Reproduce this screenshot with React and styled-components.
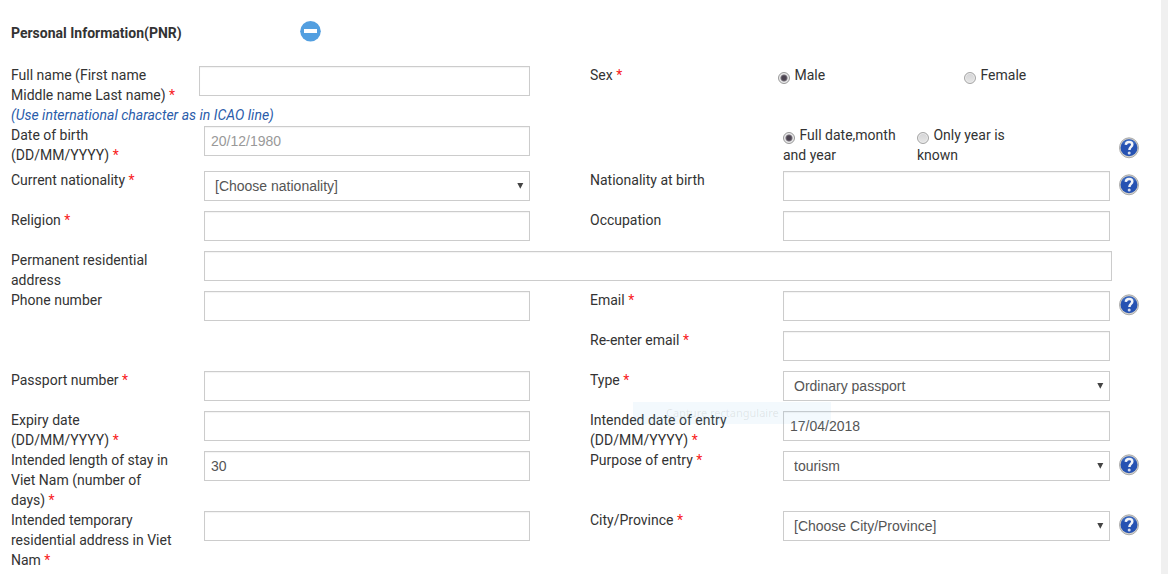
import React from "react";
import styled, { createGlobalStyle, css } from "styled-components";

const GlobalStyle = createGlobalStyle`
  *, *::before, *::after { box-sizing: border-box; }
  body {
    margin: 0;
    background: #f0f0f0;
    color: #333;
    font: 14px/20px Roboto, "Liberation Sans", sans-serif;
  }
`;

const Page = styled.main`
  position: relative;
  margin-right: 7px;
  min-height: 100vh;
  padding: 0 22px 4px 11px;
  background: #fff;
`;

const Header = styled.header`
  display: flex;
  align-items: flex-start;
  padding: 21px 0 22px;
`;

const Title = styled.h1`
  flex: 0 0 289px;
  margin: 0;
  padding-top: 2px;
  font-size: 14px;
  line-height: 20px;
  font-weight: 700;
`;

const CollapseButton = styled.button`
  display: block;
  width: 21px;
  height: 21px;
  padding: 0;
  border: 0;
  background: none;
  cursor: pointer;
  svg { display: block; }
`;

const Label = styled.label`
  grid-column: ${(p) => (p.$right ? 4 : 1)};
  padding-right: 30px;
`;

const GroupLabel = styled(Label).attrs({ as: "span" })``;

const Row = styled.div`
  display: grid;
  grid-template-columns: 193px 326fr 60px 193px 327fr 29px;
  align-items: start;
  min-height: ${(p) => (p.$tall ? 45 : 40)}px;
`;

const NameRow = styled(Row)`
  grid-template-columns: 188px 331fr 60px 188px 332fr 29px;
  ${Label} { padding-right: 20px; }
`;

const AddressRow = styled(Row)`
  grid-template-columns: 193px 1fr 27px;
`;

const Required = styled.span`
  color: #f8201c;
`;

const Note = styled.em`
  grid-column: 1 / 4;
  color: #2a5caa;
`;

const control = css`
  display: block;
  width: 100%;
  height: 30px;
  margin: 1px 0 0;
  border: 1px solid #ccc;
  border-radius: 0;
  background: #fff;
  color: #555;
  font: 14px/20px "Liberation Sans", Arial, sans-serif;
`;

const Input = styled.input`
  ${control}
  padding: 4px 6px;
  box-shadow: inset 0 1px 1px rgba(0, 0, 0, 0.05);
  &::placeholder { color: #999; opacity: 1; }
`;

const SelectBox = styled.div`
  position: relative;
  svg {
    position: absolute;
    top: 12px;
    right: 6px;
    pointer-events: none;
  }
`;

const Select = styled.select`
  ${control}
  appearance: none;
  padding: 4px 20px 4px 10px;
`;

const RadioGroup = styled.div`
  display: grid;
  grid-template-columns: ${(p) => p.$columns};
`;

const Option = styled.label`
  padding-right: 18px;
`;

const Radio = styled.input.attrs({ type: "radio" })`
  appearance: none;
  width: 12px;
  height: 12px;
  margin: 7px 1px 0 0;
  vertical-align: top;
  border: 1px solid #a5a5a5;
  border-radius: 50%;
  background: linear-gradient(#d4d4d6, #e6e6e6);
  box-shadow: inset 0 0 0 1px #ececec;
  &:checked {
    border-color: #999;
    background: radial-gradient(circle, #4b4350 0 2px, #77717a 3px, #e0e0e2 4px);
  }
`;

const HelpButton = styled.button`
  grid-column: 6;
  justify-self: end;
  width: 20px;
  height: 22px;
  margin-top: ${(p) => (p.$low ? 12 : 4)}px;
  padding: 0;
  border: 0;
  background: none;
  cursor: pointer;
  svg { display: block; }
`;

const GhostTip = styled.div`
  position: absolute;
  top: 402px;
  left: 633px;
  width: 198px;
  height: 22px;
  padding-left: 33px;
  background: rgba(120, 190, 235, 0.09);
  color: rgba(90, 90, 90, 0.13);
  font: 11px/22px "Noto Sans", sans-serif;
  white-space: nowrap;
  pointer-events: none;
`;

function Minus() {
  return (
    <svg width="21" height="21" viewBox="0 0 21 21" aria-hidden="true">
      <circle cx="10.5" cy="10.3" r="10.3" fill="#539fe0" />
      <rect x="4" y="8" width="13" height="4" fill="#fff" />
    </svg>
  );
}

function Arrow() {
  return (
    <svg width="7" height="7" viewBox="0 0 7 7" aria-hidden="true">
      <path d="M0.3 1h6L3.3 6.700z" fill="#444" />
    </svg>
  );
}

function Help({ topic, low }) {
  return (
    <HelpButton type="button" aria-label={`Help: ${topic}`} $low={low}>
      <svg width="20" height="22" viewBox="0 0 20 22" aria-hidden="true">
        <ellipse cx="10" cy="10.8" rx="9.5" ry="10" fill="#d4d3cd" stroke="#a3a3a3" strokeWidth="0.9" />
        <circle cx="10" cy="10.7" r="8.500" fill="#2652b2" />
        <path d="M2.800 7.200a8 8 0 0 1 14.400 0c-4-1.500-10.400-1.500-14.400 0z" fill="#4272c6" opacity="0.700" />
        <path
          d="M6.800 7.900C7 5.700 8.400 4.900 10.100 4.900c2 0 3.200 1.100 3.200 2.600 0 2.400-2.900 2.600-2.900 5.400"
          fill="none"
          stroke="#f2f4f8"
          strokeWidth="2.500"
        />
        <circle cx="10.200" cy="15.900" r="1.500" fill="#d5dced" />
      </svg>
    </HelpButton>
  );
}

function Field({ id, label, required, right, options, ...rest }) {
  return (
    <>
      <Label htmlFor={id} $right={right}>
        {label}
        {required && <Required> *</Required>}
      </Label>
      {options ? (
        <SelectBox>
          <Select id={id} {...rest}>
            {options.map((o) => (
              <option key={o}>{o}</option>
            ))}
          </Select>
          <Arrow />
        </SelectBox>
      ) : (
        <Input id={id} {...rest} />
      )}
    </>
  );
}

export default function App() {
  return (
    <>
      <GlobalStyle />
      <Page>
        <Header>
          <Title>Personal Information(PNR)</Title>
          <CollapseButton type="button" aria-label="Collapse section">
            <Minus />
          </CollapseButton>
        </Header>
        <form>
          <NameRow>
            <Field id="name" label="Full name (First name Middle name Last name)" required />
            <GroupLabel id="sex" $right>
              Sex<Required> *</Required>
            </GroupLabel>
            <RadioGroup role="radiogroup" aria-labelledby="sex" $columns="186px 1fr">
              <Option><Radio name="sex" defaultChecked /> Male</Option>
              <Option><Radio name="sex" /> Female</Option>
            </RadioGroup>
            <Note>(Use international character as in ICAO line)</Note>
          </NameRow>
          <Row $tall>
            <Field id="dob" label="Date of birth (DD/MM/YYYY)" required placeholder="20/12/1980" />
            <div />
            <div />
            <RadioGroup role="radiogroup" aria-label="Date precision" $columns="134px 134px">
              <Option><Radio name="precision" defaultChecked /> Full date,month and year</Option>
              <Option><Radio name="precision" /> Only year is known</Option>
            </RadioGroup>
            <Help topic="Date of birth" low />
          </Row>
          <Row>
            <Field id="nationality" label="Current nationality" required options={["[Choose nationality]"]} />
            <Field id="birth-nationality" label="Nationality at birth" right />
            <Help topic="Nationality at birth" />
          </Row>
          <Row>
            <Field id="religion" label="Religion" required />
            <Field id="occupation" label="Occupation" right />
          </Row>
          <AddressRow>
            <Field id="address" label="Permanent residential address" />
          </AddressRow>
          <Row>
            <Field id="phone" label="Phone number" />
            <Field id="email" label="Email" required right />
            <Help topic="Email" />
          </Row>
          <Row>
            <Field id="email-again" label="Re-enter email" required right />
          </Row>
          <Row>
            <Field id="passport" label="Passport number" required />
            <Field id="type" label="Type" required right options={["Ordinary passport"]} />
          </Row>
          <Row>
            <Field id="expiry" label="Expiry date (DD/MM/YYYY)" required />
            <Field id="entry" label="Intended date of entry (DD/MM/YYYY)" required right defaultValue="17/04/2018" />
          </Row>
          <Row>
            <Field id="stay" label="Intended length of stay in Viet Nam (number of days)" required defaultValue="30" />
            <Field id="purpose" label="Purpose of entry" required right options={["tourism"]} />
            <Help topic="Purpose of entry" />
          </Row>
          <Row>
            <Field id="stay-address" label="Intended temporary residential address in Viet Nam" required />
            <Field id="city" label="City/Province" required right options={["[Choose City/Province]"]} />
            <Help topic="City/Province" />
          </Row>
        </form>
        <GhostTip>Capture rectangulaire</GhostTip>
      </Page>
    </>
  );
}
